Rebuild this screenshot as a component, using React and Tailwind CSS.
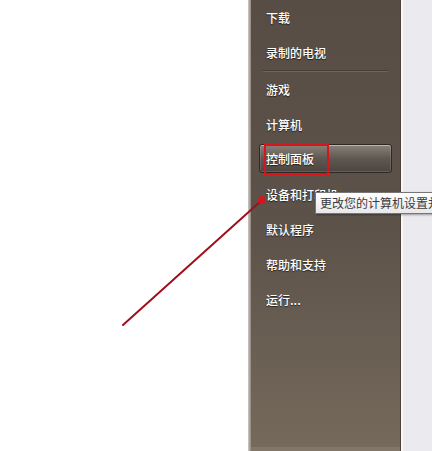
import React from "react";

const font = { fontFamily: '"Noto Sans CJK SC", "Noto Sans", sans-serif' };

function Item({ label, active }) {
  if (active) {
    return (
      <div className="h-[35px] pt-[2px] pb-[4px] px-[8px]">
        <div className="h-full rounded-[3px] border border-[#2f2925] bg-gradient-to-b from-[#8a8279] via-[#5f5851] to-[#4d4640] shadow-[inset_0_1px_0_rgba(255,255,255,0.35),inset_0_0_0_1px_rgba(255,255,255,0.12)] flex items-center pl-[6px]">
          <span className="text-[12px] font-medium leading-none text-white [text-shadow:0_1px_1px_rgba(0,0,0,0.6)]">{label}</span>
        </div>
      </div>
    );
  }
  return (
    <div className="h-[35px] flex items-center pl-[15px]">
      <span className="text-[12px] font-medium leading-none text-white [text-shadow:0_1px_1px_rgba(0,0,0,0.6)]">{label}</span>
    </div>
  );
}

export default function App() {
  return (
    <div className="relative w-[432px] h-[451px] overflow-hidden bg-white flex" style={font}>
      <div className="w-[248px] bg-white" />
      <div className="w-[3px] bg-gradient-to-r from-[#cfcbc7] to-[#8f857c]" />
      <div className="w-[150px] flex flex-col bg-gradient-to-b from-[#574d45] via-[#5c5249] to-[#766a5c] border-r border-[#4a423b]">
        <Item label="下载" />
        <Item label="录制的电视" />
        <div className="mx-[12px] h-[2px] border-t border-[#463e37] border-b border-b-[#6e655c]" />
        <Item label="游戏" />
        <Item label="计算机" />
        <Item label="控制面板" active />
        <Item label="设备和打印机" />
        <Item label="默认程序" />
        <Item label="帮助和支持" />
        <Item label="运行..." />
        <div className="flex-1" />
        <div className="h-[4px] bg-[#8a7f72] opacity-60" />
      </div>
      <div className="w-[2px] bg-[#f8f8f8]" />
      <div className="flex-1 bg-[#ebeaee]" />

      {/* red highlight rectangle */}
      <div className="absolute left-[264px] top-[144px] w-[65px] h-[31px] border-2 border-[#d8141c]" />

      {/* tooltip */}
      <div className="absolute left-[315px] top-[192px] h-[22px] w-[140px] bg-gradient-to-b from-[#ffffff] to-[#e8e8ec] border border-[#767676] shadow-[1px_1px_2px_rgba(0,0,0,0.35)] flex items-center pl-[4px]">
        <span className="text-[12px] leading-none text-[#3a3a3a] whitespace-nowrap">更改您的计算机设置并</span>
      </div>

      {/* red arrow line */}
      <svg className="absolute left-0 top-0" width="432" height="451" viewBox="0 0 432 451">
        <line x1="123" y1="325" x2="262" y2="200" stroke="#a0101c" strokeWidth="2" strokeLinecap="round" />
        <circle cx="262" cy="200" r="4" fill="#e0101c" opacity="0.85" />
      </svg>
    </div>
  );
}
